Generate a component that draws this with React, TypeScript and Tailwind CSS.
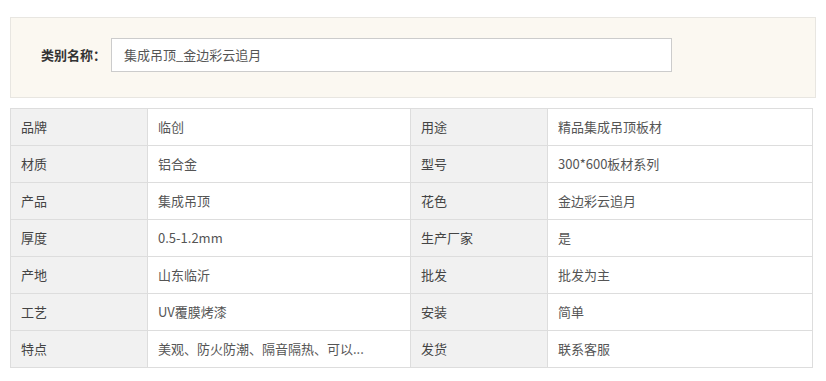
const rows: [string, string, string, string][] = [
  ["品牌", "临创", "用途", "精品集成吊顶板材"],
  ["材质", "铝合金", "型号", "300*600板材系列"],
  ["产品", "集成吊顶", "花色", "金边彩云追月"],
  ["厚度", "0.5-1.2mm", "生产厂家", "是"],
  ["产地", "山东临沂", "批发", "批发为主"],
  ["工艺", "UV覆膜烤漆", "安装", "简单"],
  ["特点", "美观、防火防潮、隔音隔热、可以...", "发货", "联系客服"],
];

function CategoryBar() {
  return (
    <div className="mx-[10px] mt-[17px] flex h-[81px] items-start border border-[#e8e6e1] bg-[#fbf8f1] pl-[30px] pt-[20px]">
      <span className="flex h-[34px] w-[70px] items-center text-[13px] font-bold text-[#333]">类别名称：</span>
      <div className="flex h-[34px] w-[561px] items-center border border-[#cccccc] bg-white pl-[12px] text-[13px] text-[#555]">
        集成吊顶_金边彩云追月
      </div>
    </div>
  );
}

function SpecTable() {
  return (
    <table className="mx-[10px] mt-[10px] w-[802px] table-fixed border-collapse text-[13px]">
      <colgroup>
        <col className="w-[137px]" />
        <col className="w-[263px]" />
        <col className="w-[137px]" />
        <col className="w-[265px]" />
      </colgroup>
      <tbody>
        {rows.map((r) => (
          <tr key={r[0]} className="h-[37px]">
            <td className="border border-[#dddddd] bg-[#f1f1f1] pl-[10px] text-[#444]">{r[0]}</td>
            <td className="border border-[#dddddd] bg-white pl-[10px] text-[#555]">{r[1]}</td>
            <td className="border border-[#dddddd] bg-[#f1f1f1] pl-[10px] text-[#444]">{r[2]}</td>
            <td className="border border-[#dddddd] bg-white pl-[10px] text-[#555]">{r[3]}</td>
          </tr>
        ))}
      </tbody>
    </table>
  );
}

export default function App() {
  return (
    <div className="flex h-[381px] w-[826px] flex-col bg-white font-['Microsoft_YaHei','Noto_Sans_CJK_SC',sans-serif]">
      <CategoryBar />
      <SpecTable />
    </div>
  );
}
